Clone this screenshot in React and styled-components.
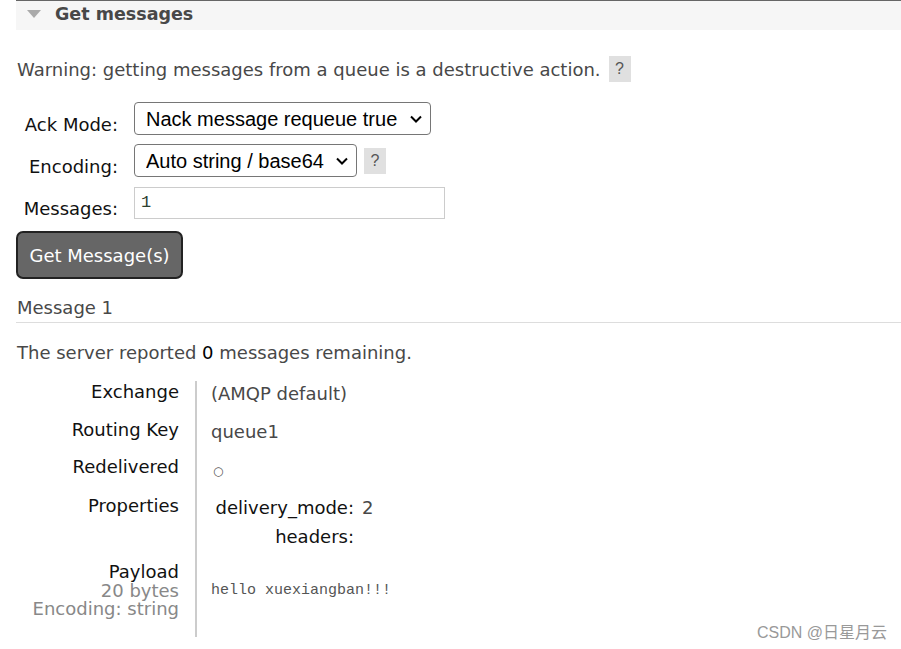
import React from 'react';
import styled, { createGlobalStyle } from 'styled-components';

const GlobalStyle = createGlobalStyle`
    body {
        margin: 0;
        background: #fff;
        font-family: "DejaVu Sans", Verdana, sans-serif;
        color: #484848;
    }
`

const Page = styled.div`
    padding-left: 16px;
    width: 885px;
    height: 649px;
    position: relative;
    overflow: hidden;
`

const SectionHeader = styled.div`
    border-top: 1px solid #666;
    background-color: #f6f6f6;
    height: 30px;
    box-sizing: border-box;
    padding: 0 0 3px 11px;
    display: flex;
    align-items: center;
    gap: 14px;
    font-size: 17.5px;
    font-weight: bold;
    color: #484848;
`

const Arrow = styled.span`
    width: 0;
    height: 0;
    border-left: 7px solid transparent;
    border-right: 7px solid transparent;
    border-top: 8px solid #aaa;
`

const Warning = styled.p`
    margin: 26px 0 0 1px;
    font-size: 18px;
    display: flex;
    align-items: center;
    gap: 8px;
`

const Help = styled.span`
    display: inline-flex;
    align-items: center;
    justify-content: center;
    width: 22px;
    height: 26px;
    background: #e0e0e0;
    color: #555;
    font-family: "Liberation Sans", Arial, sans-serif;
    font-size: 16px;
`

const Form = styled.div`
    display: grid;
    grid-template-columns: 102px auto;
    column-gap: 16px;
    row-gap: 9px;
    margin-top: 20px;
    align-items: center;
`

const Label = styled.label`
    text-align: right;
    font-size: 18px;
    color: #111;
    padding-top: 12px;
`

const Field = styled.div`
    display: flex;
    align-items: center;
    gap: 7px;
`

const SelectWrap = styled.div`
    position: relative;
    display: inline-flex;
`

const Select = styled.select`
    appearance: none;
    height: 33px;
    border: 1px solid #767676;
    border-radius: 4px;
    background: #fff;
    font-family: "Liberation Sans", Arial, sans-serif;
    font-size: 20px;
    color: #000;
    padding: 0 32px 0 11px;
`

const Chevron = styled.svg`
    position: absolute;
    right: 9px;
    top: 13px;
    pointer-events: none;
`

const Input = styled.input`
    width: 311px;
    height: 32px;
    box-sizing: border-box;
    border: 1px solid #ccc;
    font-family: "Liberation Mono", monospace;
    font-size: 17px;
    color: #2d4030;
    padding: 0 6px;
`

const Button = styled.button`
    margin-top: 12px;
    width: 167px;
    height: 48px;
    background: #666;
    border: 2px solid #222;
    border-radius: 7px;
    color: #fff;
    font-family: "DejaVu Sans", Verdana, sans-serif;
    font-size: 18px;
`

const MessageTitle = styled.div`
    margin-top: 18px;
    padding: 0 0 4px 1px;
    font-size: 18px;
    color: #484848;
    border-bottom: 1px solid #ddd;
`

const Remaining = styled.p`
    margin: 19px 0 0 1px;
    font-size: 18px;
    b {
        font-weight: normal;
        color: #000;
    }
`

const Details = styled.div`
    display: grid;
    grid-template-columns: 163px 2px auto;
    margin-top: 18px;
`

const Divider = styled.div`
    grid-column: 2;
    grid-row: 1 / span 5;
    background: #ccc;
    margin-left: 16px;
    width: 2px;
`

const Key = styled.div`
    grid-column: 1;
    text-align: right;
    font-size: 18px;
    color: #111;
    line-height: 18.5px;
    padding: ${p => p.$pad || '2px 0 17px'};
`

const Sub = styled.div`
    color: #888;
    line-height: 18.5px;
`

const Value = styled.div`
    grid-column: 3;
    padding: ${p => p.$pad || '4px 0 15px 30px'};
    font-size: 18px;
    line-height: 18px;
    color: #484848;
`

const Dot = styled.span`
    font-size: 12px;
    padding-left: 2px;
    color: #555;
`

const Props = styled.div`
    display: grid;
    grid-template-columns: 143px auto;
    column-gap: 8px;
    row-gap: 11px;
`

const PropKey = styled.span`
    text-align: right;
    color: #111;
`

const Payload = styled.pre`
    margin: 0;
    font-family: "Liberation Mono", "DejaVu Sans Mono", monospace;
    font-size: 15px;
    color: #555;
`

const Watermark = styled.div`
    position: absolute;
    right: 14px;
    top: 619px;
    font-family: "Liberation Sans", "Noto Sans CJK SC", sans-serif;
    font-size: 16px;
    color: #999;
`

const Dropdown = ({ value, children }) => (
    <SelectWrap>
        <Select defaultValue={value}>{children}</Select>
        <Chevron width="12" height="8" viewBox="0 0 12 8">
            <path d="M1 1.5 L6 6.5 L11 1.5" fill="none" stroke="#000" strokeWidth="2" />
        </Chevron>
    </SelectWrap>
)

const App = () => {
    return (
        <Page>
            <GlobalStyle />
            <SectionHeader>
                <Arrow />
                Get messages
            </SectionHeader>

            <Warning>
                Warning: getting messages from a queue is a destructive action.
                <Help>?</Help>
            </Warning>

            <Form>
                <Label>Ack Mode:</Label>
                <Field>
                    <Dropdown value="nack">
                        <option value="nack">Nack message requeue true</option>
                    </Dropdown>
                </Field>
                <Label>Encoding:</Label>
                <Field>
                    <Dropdown value="auto">
                        <option value="auto">Auto string / base64</option>
                    </Dropdown>
                    <Help>?</Help>
                </Field>
                <Label>Messages:</Label>
                <Field>
                    <Input defaultValue="1" />
                </Field>
            </Form>

            <Button>Get Message(s)</Button>

            <MessageTitle>Message 1</MessageTitle>

            <Remaining>
                The server reported <b>0</b> messages remaining.
            </Remaining>

            <Details>
                <Divider />
                <Key>Exchange</Key>
                <Value>(AMQP default)</Value>
                <Key>Routing Key</Key>
                <Value>queue1</Value>
                <Key>Redelivered</Key>
                <Value><Dot>○</Dot></Value>
                <Key>Properties</Key>
                <Value>
                    <Props>
                        <PropKey>delivery_mode:</PropKey>
                        <span>2</span>
                        <PropKey>headers:</PropKey>
                        <span></span>
                    </Props>
                </Value>
                <Key $pad="2px 0 18px">
                    Payload
                    <Sub>20 bytes</Sub>
                    <Sub>Encoding: string</Sub>
                </Key>
                <Value $pad="21px 0 0 30px">
                    <Payload>hello xuexiangban!!!</Payload>
                </Value>
            </Details>

            <Watermark>CSDN @日星月云</Watermark>
        </Page>
    );
}

export default App;
